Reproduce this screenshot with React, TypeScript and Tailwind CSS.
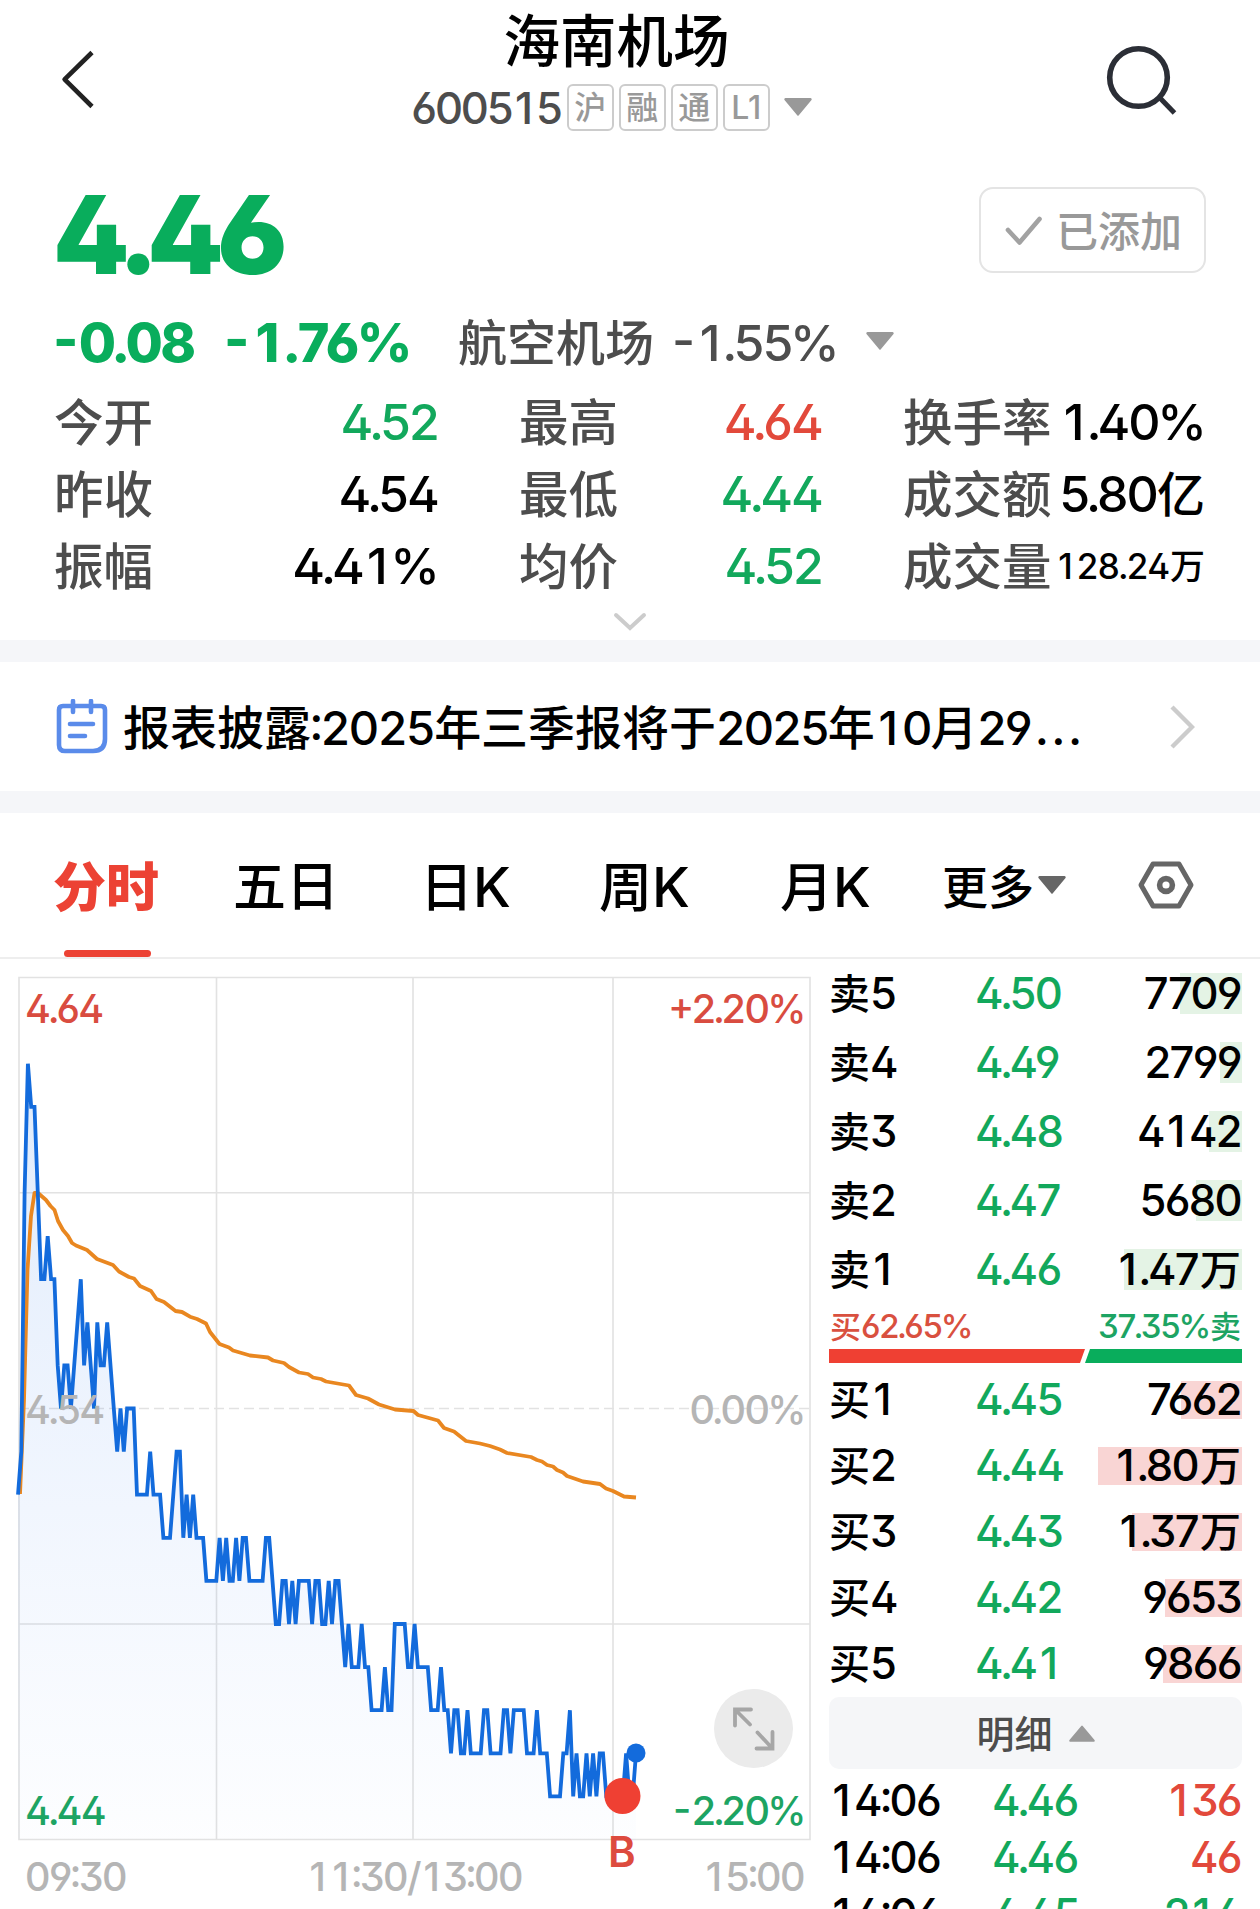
import type { ReactNode } from 'react';

type Tone = 'up' | 'down' | 'flat';

const toneClass: Record<Tone, string> = {
  up: 'text-[#e2493b]',
  down: 'text-[#12a85c]',
  flat: 'text-black',
};

const badges = ['沪', '融', '通', 'L1'];

const asks = [
  { label: '5', price: '4.50', volume: '7709', bar: 62 },
  { label: '4', price: '4.49', volume: '2799', bar: 22 },
  { label: '3', price: '4.48', volume: '4142', bar: 33 },
  { label: '2', price: '4.47', volume: '5680', bar: 46 },
  { label: '1', price: '4.46', volume: '1.47', unit: '万', bar: 118 },
];

const bids = [
  { label: '1', price: '4.45', volume: '7662', bar: 61 },
  { label: '2', price: '4.44', volume: '1.80', unit: '万', bar: 144 },
  { label: '3', price: '4.43', volume: '1.37', unit: '万', bar: 110 },
  { label: '4', price: '4.42', volume: '9653', bar: 77 },
  { label: '5', price: '4.41', volume: '9866', bar: 79 },
];

const ticks: { time: string; price: string; volume: string; tone: Tone }[] = [
  { time: '14:06', price: '4.46', volume: '136', tone: 'up' },
  { time: '14:06', price: '4.46', volume: '46', tone: 'up' },
  { time: '14:06', price: '4.45', volume: '214', tone: 'down' },
];

// [price in cents, minutes it stayed there], starting at 09:30
const priceRuns: [number, number][] = [
  [452, 1], [453, 1], [459, 1], [462, 1], [461, 2], [459, 1], [457, 2], [458, 1], [457, 2], [455, 1],
  [454, 1], [455, 2], [454, 1], [455, 1], [456, 1], [457, 1], [455, 1], [456, 1], [455, 1], [454, 1],
  [456, 1], [455, 2], [456, 1], [455, 1], [454, 1], [453, 1], [454, 1], [453, 1], [454, 3], [452, 4],
  [453, 1], [452, 3], [451, 3], [452, 1], [453, 2], [451, 1], [452, 1], [451, 1], [452, 1], [451, 3],
  [450, 4], [451, 1], [450, 1], [451, 1], [450, 2], [451, 1], [450, 1], [451, 2], [450, 5], [451, 2],
  [450, 1], [449, 2], [450, 2], [449, 1], [450, 1], [449, 1], [450, 4], [449, 1], [450, 2], [449, 2],
  [450, 1], [449, 1], [450, 2], [449, 1], [448, 1], [449, 1], [448, 3], [449, 1], [448, 2], [447, 4],
  [448, 1], [447, 2], [449, 4], [448, 2], [449, 1], [448, 4], [447, 3], [448, 1], [447, 2], [446, 1],
  [447, 2], [446, 2], [447, 1], [446, 4], [447, 2], [446, 4], [447, 2], [446, 1], [447, 4], [446, 3],
  [447, 1], [446, 3], [445, 4], [446, 2], [447, 1], [445, 1], [446, 1], [445, 2], [446, 1], [445, 1],
  [446, 1], [445, 1], [446, 2], [445, 6], [446, 1], [445, 2], [446, 1],
];

const averageLine =
  '2,518 6,424 9.5,294 13,240 16.5,217 20,217 28,224 32.5,230 36.5,234 40,245 45,254 50,260 54,267 58,269.5 69,274 79,283 95,289 101,295.5 111,301 116,302.5 122,310 133,315 138.5,323 146,326 157.5,335 164,336 172,340.7 179,343 188,347.5 192,356 201.5,368 211,371.5 215,374.5 232,379.5 250,381.5 255,384.5 266,387 271,391 281,396.5 290,398 295,401.5 303,403 308,405.5 331,409.5 338,419 350,422.5 361,428.5 377,433.5 395.5,435 400,439 420,444.5 426,452 436,455.5 448,465 462,467.5 472,470 482,473.5 489,477 513,481 519,484 524,485.5 529,489 535,490.5 539,494 545,496.5 549,500 565,505.5 582,508 588,512.5 595,515 606,520.5 618,521.5';

const pricePoints = priceRuns
  .flatMap(([cents, minutes]) => Array<number>(minutes).fill(cents))
  .map((cents, i) => `${(i * 3.305).toFixed(1)},${(1.5 + (464 - cents) * 43.1).toFixed(1)}`)
  .join(' ');

const glyphSpacing: Record<string, string> = {
  '1': 'ml-[0.08em] mr-[0.12em]',
  '.': '-mx-[0.045em]',
  ':': '-mx-[0.035em]',
  '-': 'mr-[0.05em]',
  '%': '-ml-[0.03em]',
};

type NumProps = { children: string; className?: string; tracking?: string };

// Widens the narrow "1" and tightens punctuation so that figures line up in columns
const Num = ({ children, className = '', tracking = 'tracking-[-0.038em]' }: NumProps) => (
  <span className={`${tracking} ${className}`}>
    {children.split(/([1.:%-])/).map((part, i) => (glyphSpacing[part] ? <span key={i} className={glyphSpacing[part]}>{part}</span> : part))}
  </span>
);

const Triangle = ({ className }: { className: string }) => (
  <svg viewBox="0 0 28 18" fill="currentColor" className={className} aria-hidden="true">
    <path d="M1.5 0h25a1.3 1.3 0 0 1 1 2L14.8 17.2a1 1 0 0 1-1.6 0L.5 2a1.3 1.3 0 0 1 1-2z" />
  </svg>
);

const Header = () => (
  <header className="flex h-[150px] items-start">
    <svg viewBox="0 0 36 60" className="mt-[49px] ml-[60px] h-[60px] w-9" fill="none" stroke="#222" strokeWidth="4.6" aria-label="返回">
      <path d="M32 3.5 4.6 30.4 32 57.5" strokeLinejoin="round" />
    </svg>
    <div className="flex flex-1 flex-col items-center pl-[34px]">
      <h1 className="pt-0.5 text-[56.5px] leading-[80px] font-medium">海南机场</h1>
      <div className="-ml-2.5 flex h-[50px] items-center">
        <Num className="pt-[3px] text-[43.5px] font-[530] text-[#4d4d4d]" tracking="tracking-[-0.05em]">600515</Num>
        <div className="ml-1.5 flex gap-[5px]">
          {badges.map((badge) => (
            <span key={badge} className="flex h-[47px] w-[47px] items-center justify-center rounded-md border-2 border-[#ccc] pt-0.5 text-[32px] leading-none text-[#999]">
              {badge}
            </span>
          ))}
        </div>
        <Triangle className="ml-3.5 h-[18px] w-7 text-[#999]" />
      </div>
    </div>
    <svg viewBox="0 0 77 77" className="mt-[41px] mr-20 h-[77px] w-[77px]" fill="none" stroke="#2b2e36" strokeWidth="5.6" aria-label="搜索">
      <circle cx="35.5" cy="36.5" r="28.8" />
      <path d="m57 57 14.5 15" strokeWidth="5" />
    </svg>
  </header>
);

const Stat = ({ label, children, tone = 'flat', small = false }: { label: string; children: ReactNode; tone?: Tone; small?: boolean }) => (
  <div className="flex h-[72px] items-center justify-between whitespace-nowrap">
    <span className="pt-[3px] text-[49.5px] text-[#4d4d4d]">{label}</span>
    <span className={`${toneClass[tone]} ${small ? 'text-[35px]' : ''}`}>{children}</span>
  </div>
);

const Quote = () => (
  <section className="h-[490px] text-[50px] leading-none">
    <div className="flex h-[150px] items-center justify-between pr-[54px] pl-[53px]">
      <Num className="mt-[18px] text-[109px] font-black text-[#09ad5c]" tracking="tracking-[-0.06em]">4.46</Num>
      <button className="mt-[10px] flex h-[86px] w-[227px] items-center rounded-[14px] border-2 border-[#e4e4e4] pl-[23px] text-[#999]">
        <svg viewBox="0 0 38 30" className="h-[30px] w-[38px]" fill="none" stroke="#a2a2a2" strokeWidth="4.6" strokeLinecap="round" strokeLinejoin="round">
          <path d="M4 15 15.5 27.5 35.5 4" />
        </svg>
        <span className="ml-[14px] pt-[3px] text-[42px] leading-none">已添加</span>
      </button>
    </div>
    <div className="flex h-[85px] items-center pl-[53px] whitespace-nowrap">
      <Num className="w-[171px] text-[54px] font-extrabold text-[#09ad5c]" tracking="tracking-[-0.045em]">-0.08</Num>
      <Num className="w-[234px] text-[54px] font-extrabold text-[#09ad5c]" tracking="tracking-[-0.02em]">-1.76%</Num>
      <span className="pt-0.5 text-[49px] text-[#4d4d4d]">航空机场</span>
      <Num className="ml-[18px] w-[194px] text-[#4d4d4d]">-1.55%</Num>
      <Triangle className="-mt-1 h-[18px] w-7 text-[#999]" />
    </div>
    <div className="grid grid-cols-[384px_303px_302px] gap-x-[81px] pt-px pl-[54px]">
      <Stat label="今开" tone="down"><Num>4.52</Num></Stat>
      <Stat label="最高" tone="up"><Num>4.64</Num></Stat>
      <Stat label="换手率"><Num>1.40%</Num></Stat>
      <Stat label="昨收"><Num>4.54</Num></Stat>
      <Stat label="最低" tone="down"><Num>4.44</Num></Stat>
      <Stat label="成交额"><Num>5.80</Num><span className="text-[48px]">亿</span></Stat>
      <Stat label="振幅"><Num>4.41%</Num></Stat>
      <Stat label="均价" tone="down"><Num>4.52</Num></Stat>
      <Stat label="成交量" small><Num tracking="tracking-[-0.01em]">128.24</Num>万</Stat>
    </div>
    <svg viewBox="0 0 34 20" className="mx-auto mt-2.5 h-5 w-[34px]" fill="none" stroke="#ccc" strokeWidth="4" strokeLinecap="round">
      <path d="m3 3 14 13L31 3" />
    </svg>
  </section>
);

const Notice = () => (
  <section className="flex h-[129px] items-center pl-[56px]">
    <svg viewBox="0 0 52 56" className="h-14 w-[52px]" fill="none" stroke="#5a8bea" strokeWidth="4.6" strokeLinecap="round">
      <path d="M7 7h38q4 0 4 4v29q0 12-12 12H9q-6 0-6-6V11q0-4 4-4z" strokeLinejoin="round" />
      <path d="M17 2v11M35 2v11M14 25h23M14 37h15" />
    </svg>
    <p className="ml-[15px] flex-1 pt-0.5 text-[47px] leading-none whitespace-nowrap">
      报表披露<Num tracking="tracking-[-0.022em]">:2025</Num>年三季报将于<Num tracking="tracking-[-0.03em]">2025</Num>年<Num>10</Num>月<Num>29</Num>
      <span className="ml-1 tracking-[0.05em]">...</span>
    </p>
    <svg viewBox="0 0 26 44" className="mr-[65px] h-11 w-[26px]" fill="none" stroke="#ccc" strokeWidth="4.4">
      <path d="m3 2 20 20L3 42" />
    </svg>
  </section>
);

const Tabs = () => (
  <nav className="flex h-[146px] items-center border-b-2 border-[#eee] pl-[54px] text-[53px] leading-none whitespace-nowrap">
    <div className="relative flex h-full w-[179px] items-center font-black text-[#ec4234]">
      <span className="-ml-px pt-[7px]">分时</span>
      <span className="absolute bottom-0 left-2.5 h-[7px] w-[87px] rounded-full bg-[#ec4234]" />
    </div>
    <span className="w-[187px] pt-[5px]">五日</span>
    <span className="w-[179px] pt-[5px]">日<span className="text-[55px]">K</span></span>
    <span className="w-[181px] pt-[5px]">周<span className="text-[55px]">K</span></span>
    <span className="w-[162px] pt-[5px]">月<span className="text-[55px]">K</span></span>
    <span className="pt-[3px] text-[46px]">更多</span>
    <Triangle className="ml-1 h-[18px] w-7 text-[#666]" />
    <svg viewBox="0 0 56 50" className="ml-[72px] h-[50px] w-14" fill="none" stroke="#666" strokeWidth="5">
      <path d="M15 4h26l12 21-12 21H15L3 25z" strokeLinejoin="round" />
      <circle cx="28" cy="25" r="6.4" strokeWidth="5.6" />
    </svg>
  </nav>
);

const Chart = () => (
  <div className="w-[829px] shrink-0 pt-[17px] text-[39.5px] leading-[40px]">
    <div className="relative ml-[18px] h-[866px] w-[793px]">
      <svg viewBox="0 0 793 866" className="absolute inset-0 h-[866px] w-[793px] overflow-visible" fill="none">
        <defs>
          <linearGradient id="area" x1="0" y1="88" x2="0" y2="864" gradientUnits="userSpaceOnUse">
            <stop offset="0" stopColor="#1268dd" stopOpacity="0.13" />
            <stop offset="0.5" stopColor="#2a75f0" stopOpacity="0.075" />
            <stop offset="1" stopColor="#2a75f0" stopOpacity="0.01" />
          </linearGradient>
        </defs>
        <g stroke="#e2e2e2" strokeWidth="1.6">
          <path d="M1 1.5H792V863.5H1zM198.5 1.5V863.5M395 1.5V863.5M595 1.5V863.5M1 216.7H792M1 648H792" />
          <path d="M1 432.5H792" strokeDasharray="10 5" />
        </g>
        <polygon points={`0,863 ${pricePoints} 618,863`} fill="url(#area)" />
        <polyline points={averageLine} stroke="#e98720" strokeWidth="3.8" strokeLinejoin="round" />
        <polyline points={pricePoints} stroke="#136bdc" strokeWidth="3.8" />
        <circle cx="618" cy="777" r="9.5" fill="#136bdc" />
        <circle cx="604.5" cy="820" r="18" fill="#ef4033" />
        <circle cx="735.5" cy="752.5" r="39.5" fill="#ebebeb" />
        <path
          d="M733 733.5H717V749.5M718 734.5l14 14M738.5 772.5h16V756M753.5 771.5l-14-15"
          stroke="#a6a6a6"
          strokeWidth="3.8"
          strokeLinecap="round"
        />
      </svg>
      <Num className="absolute top-[13px] left-[7px] text-[#d94c40]">4.64</Num>
      <Num className="absolute top-[13px] right-[6px] text-[#d94c40]">+2.20%</Num>
      <Num className="absolute top-[414px] left-[7px] text-[#b5b5b5]">4.54</Num>
      <Num className="absolute top-[414px] right-[6px] text-[#b5b5b5]">0.00%</Num>
      <Num className="absolute top-[815px] left-[7px] text-[#1da463]">4.44</Num>
      <Num className="absolute top-[815px] right-[6px] text-[#1da463]">-2.20%</Num>
      <span className="absolute top-[856px] left-[590px] text-[42px] font-semibold text-[#dd4b3e]">B</span>
    </div>
    <div className="ml-[25px] flex w-[779px] justify-between pt-[15px] text-[#b5b5b5]">
      <Num>09:30</Num>
      <Num>11:30/13:00</Num>
      <Num>15:00</Num>
    </div>
  </div>
);

type Level = { label: string; price: string; volume: string; unit?: string; bar: number };

const BookRow = ({ side, level }: { side: '卖' | '买'; level: Level }) => {
  const ask = side === '卖';

  return (
    <div className={`flex items-center ${ask ? 'h-[69px]' : 'h-[66px]'}`}>
      <span className="w-[146px] text-[41px]">{side}<Num className="text-[43.5px]">{level.label}</Num></span>
      <Num className="flex-1 text-[#12a85c]">{level.price}</Num>
      <span className={`relative flex w-[160px] items-center justify-end pr-px ${ask ? 'h-[41px]' : 'h-[38px]'}`}>
        <span className={`absolute inset-y-0 right-0 ${ask ? 'bg-[#e4f3e5]' : 'bg-[#f9d5d4]'}`} style={{ width: level.bar }} />
        <span className="relative"><Num>{level.volume}</Num>{level.unit && <span className="ml-0.5 text-[41px]">{level.unit}</span>}</span>
      </span>
    </div>
  );
};

const OrderBook = () => (
  <div className="w-[413px] text-[43.5px] leading-none font-[530] whitespace-nowrap">
    {asks.map((level) => <BookRow key={level.label} side="卖" level={level} />)}
    <div className="flex h-[45px] items-center justify-between px-px text-[33px] font-medium">
      <span className="text-[#d9503f]"><span className="text-[31px]">买</span><Num>62.65%</Num></span>
      <span className="text-[#1da463]"><Num>37.35%</Num><span className="text-[31px]">卖</span></span>
    </div>
    <div className="flex h-3.5">
      <span className="w-[256px] bg-[#ef4033] [clip-path:polygon(0_0,100%_0,calc(100%_-_5px)_100%,0_100%)]" />
      <span className="flex-1 bg-[#09ad5c] [clip-path:polygon(5px_0,100%_0,100%_100%,0_100%)]" />
    </div>
    <div className="pt-1">
      {bids.map((level) => <BookRow key={level.label} side="买" level={level} />)}
    </div>
    <button className="flex h-[72px] w-full items-center justify-center rounded-[10px] bg-[#f5f6f8] text-[38px] font-medium text-[#4d4d4d]">
      <span className="pt-0.5">明细</span>
      <Triangle className="ml-4 h-[17px] w-[26px] rotate-180 text-[#999]" />
    </button>
    <div className="pt-[3px]">
      {ticks.map((tick, i) => (
        <div key={i} className="flex h-[57px] items-center pr-px">
          <Num className="w-[163px]">{tick.time}</Num>
          <Num className="flex-1 text-[#12a85c]">{tick.price}</Num>
          <span className={toneClass[tick.tone]}><Num>{tick.volume}</Num></span>
        </div>
      ))}
    </div>
  </div>
);

export default function App() {
  return (
    <main className="h-[1909px] w-[1260px] overflow-hidden bg-white font-['Inter','Noto_Sans_CJK_SC',sans-serif] font-medium text-black [font-feature-settings:'ss01','case']">
      <Header />
      <Quote />
      <div className="h-[22px] bg-[#f5f6f9]" />
      <Notice />
      <div className="h-[22px] bg-[#f5f6f9]" />
      <Tabs />
      <div className="flex">
        <Chart />
        <OrderBook />
      </div>
    </main>
  );
}
